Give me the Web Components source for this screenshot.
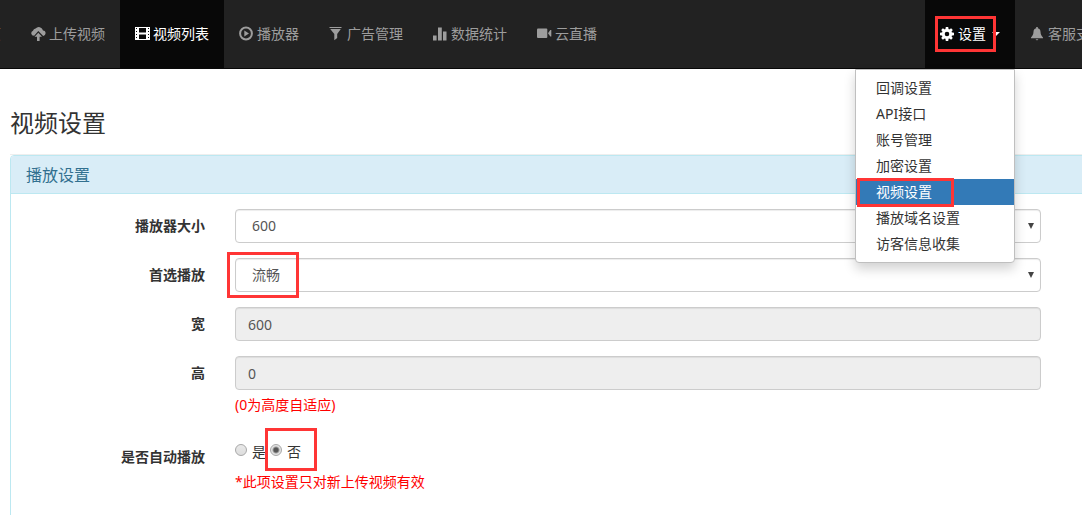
<!DOCTYPE html>
<html lang="zh-CN">
<head>
<meta charset="utf-8">
<meta name="viewport" content="width=device-width, initial-scale=1">
<title>视频设置</title>
<style>
html{overflow-x:clip}
body{margin:0;background:#fff;color:#333;font:14px/20px "Noto Sans","Noto Sans CJK SC",sans-serif;overflow-x:clip}
</style>
</head>
<body>
<video-app></video-app>
<script>
const define = (name, css, html) => customElements.define(name, class extends HTMLElement {
  connectedCallback() {
    if (this.shadowRoot) return;
    const t = document.createElement('template');
    const body = typeof html === 'function' ? html(this) : html;
    t.innerHTML = `<style>*{box-sizing:border-box}${css}</style>${body}`;
    this.attachShadow({mode: 'open'}).append(t.content.cloneNode(true));
  }
});

const glyphs = {
  upload: '<path d="M3.2 8.8A2.9 2.9 0 0 1 .2 6.2 2.6 2.6 0 0 1 2 3.8 3 3 0 0 1 4.6 1.6 4.2 4.2 0 0 1 12 3.4a2.8 2.8 0 0 1 2.6 2.8 2.8 2.8 0 0 1-2.4 2.7L7.3 4z"/><path d="M7.3 5.8 11 9.8H8.6V14H6V9.8H3.6z"/>',
  film: '<path fill-rule="evenodd" d="M0 0H15V13H0zM1 1V2H2V1zM1 4V5H2V4zM1 7V8H2V7zM1 10V11H2V10zM13 1V2H14V1zM13 4V5H14V4zM13 7V8H14V7zM13 10V11H14V10zM4 1V5.5H11V1zM4 7.5V12H11V7.5z"/>',
  play: '<circle cx="7" cy="6.5" r="5.9" fill="none" stroke="currentColor" stroke-width="2"/><path d="M5.3 3.4 10 6.5 5.3 9.6z"/>',
  filter: '<path d="M.5 0H12.5V1H.5zM1.2 2H11.8L8.2 7V11L5.3 13.2V7z"/>',
  stats: '<path d="M0 8.5H3.6V13.5H0zM5 .5H8.8V13.5H5zM10 4.5H13.5V13.5H10z"/>',
  camera: '<rect y="1.5" width="10.3" height="9.6" rx="1"/><path d="M11 6.3 13.3 3H14.3V9.6H13.3z"/>',
  cog: '<path d="M5.8 0H8.2L8.7 3H5.3zM5.8 14H8.2L8.7 11H5.3z"/><path transform="rotate(45 7 7)" d="M5.8 0H8.2L8.7 3H5.3zM5.8 14H8.2L8.7 11H5.3z"/><path transform="rotate(90 7 7)" d="M5.8 0H8.2L8.7 3H5.3zM5.8 14H8.2L8.7 11H5.3z"/><path transform="rotate(135 7 7)" d="M5.8 0H8.2L8.7 3H5.3zM5.8 14H8.2L8.7 11H5.3z"/><circle cx="7" cy="7" r="3.7" fill="none" stroke="currentColor" stroke-width="2.8"/>',
  bell: '<path d="M6.2 0H7.8V1.2C9.7 1.6 10.4 3.1 10.5 4.7 10.7 7.7 11.4 8.7 13 10.5V11.3H1V10.5C2.6 8.7 3.3 7.7 3.5 4.7 3.6 3.1 4.3 1.6 6.2 1.2zM5.5 12.2H8.5L7 13.6z"/>'
};
define('glyph-icon', ':host{display:block;flex:none;width:14px;height:14px}svg{display:block;overflow:visible}',
  e => `<svg width="14" height="14" viewBox="0 0 14 14" fill="currentColor" aria-hidden="true">${glyphs[e.getAttribute('name')] || ''}</svg>`);

/* Red outline laid over the thing that it points at; its place comes from the host's inset. */
define('highlight-box', ':host{display:block;position:absolute;z-index:5;border:3px solid #ff3535;box-sizing:border-box;pointer-events:none}', '');

define('nav-item', `
:host{display:block;flex:none;position:relative}
a{display:flex;align-items:center;gap:4px;height:68px;padding:0 15px;color:#9d9d9d;text-decoration:none;white-space:nowrap}
:host([active]) a{background:#080808;color:#fff}
.caret{margin-left:2px;border:4px solid transparent;border-top-color:currentColor;border-bottom:0}`,
  e => `<a href="#"><glyph-icon name="${e.getAttribute('icon')}"></glyph-icon><span><slot></slot></span>${e.hasAttribute('caret') ? '<i class="caret"></i>' : ''}</a><slot name="over"></slot>`);

define('menu-item', `
:host{display:block;position:relative}
a{display:block;padding:3px 20px;color:#333;text-decoration:none;white-space:nowrap}
:host([active]) a{background:#337ab7;color:#fff}
highlight-box{inset:-1px 60px -2px 1px}`,
  e => `<a href="#"><slot></slot></a>${e.hasAttribute('active') ? '<highlight-box></highlight-box>' : ''}`);

define('drop-menu', `
:host{display:block;position:absolute;z-index:4;top:calc(100% + 1px);right:0;width:160px;box-sizing:border-box;padding:5px 0;background:#fff;border:1px solid #bfbfbf;border-radius:0 0 4px 4px;box-shadow:0 6px 12px rgba(0,0,0,.18)}`,
  '<slot></slot>');

define('top-nav', `
:host{display:block;background:#222;border-bottom:1px solid #080808}
nav{display:flex;justify-content:space-between;margin:0 -37px 0 -60px}
div{display:flex}
.mark{inset:16px 19px 16px 10px}`,
  `<nav><div>
<nav-item icon="home">首页</nav-item><nav-item icon="upload">上传视频</nav-item><nav-item icon="film" active>视频列表</nav-item><nav-item icon="play">播放器</nav-item><nav-item icon="filter">广告管理</nav-item><nav-item icon="stats">数据统计</nav-item><nav-item icon="camera">云直播</nav-item>
</div><div>
<nav-item icon="cog" active caret>设置<highlight-box slot="over" class="mark"></highlight-box>
<drop-menu slot="over"><menu-item>回调设置</menu-item><menu-item>API接口</menu-item><menu-item>账号管理</menu-item><menu-item>加密设置</menu-item><menu-item active>视频设置</menu-item><menu-item>播放域名设置</menu-item><menu-item>访客信息收集</menu-item></drop-menu></nav-item><nav-item icon="bell">客服支持</nav-item>
</div></nav>`);

define('info-panel', `
:host{display:block;border:1px solid #bce8f1;border-radius:4px}
h2{margin:0;padding:9px 15px 8px;background:#d9edf7;border-bottom:1px solid #bce8f1;border-radius:3px 3px 0 0;color:#31708f;font-size:16px;font-weight:400;line-height:20px}
div{display:grid;gap:15px;padding:15px 0 40px}`,
  e => `<h2>${e.getAttribute('heading')}</h2><div><slot></slot></div>`);

const row = `
:host{display:grid;grid-template-columns:194px minmax(0,1fr);column-gap:30px}
.label{padding-top:7px;text-align:right;font-weight:700}
.field{position:relative}
.note{margin:5px 0 10px;color:#f00}
.control{display:block;width:100%;height:34px;margin:0;padding:6px 12px;border:1px solid #ccc;border-radius:4px;background:#fff;color:#555;font:inherit;box-shadow:inset 0 1px 1px rgba(0,0,0,.075)}`;

define('select-field', row + `
select.control{appearance:none;padding-left:16px}
svg{position:absolute;right:6px;top:13px;pointer-events:none}
highlight-box{left:-8px;top:-6px;width:72px;height:46px}`,
  e => `<label class="label" for="c">${e.getAttribute('label')}</label><div class="field"><select class="control" id="c"><option>${e.getAttribute('value')}</option></select><svg width="8" height="8" fill="#444" aria-hidden="true"><path d="M1 1H7L4 7z"/></svg>${e.hasAttribute('marked') ? '<highlight-box></highlight-box>' : ''}</div>`);

define('text-field', row + `
input.control{background:#eee}`,
  e => `<label class="label" for="c">${e.getAttribute('label')}</label><div class="field"><input class="control" id="c" type="text" readonly value="${e.getAttribute('value')}">${e.hasAttribute('note') ? `<p class="note">${e.getAttribute('note')}</p>` : ''}</div>`);

define('radio-field', row + `
.choices{display:flex;gap:4px;height:24px}
.choices label{display:flex;gap:5px;position:relative;line-height:24px}
input{appearance:none;width:12px;height:12px;margin:4px 0 0;border:1px solid #a8a8a8;border-radius:50%;background:linear-gradient(#e9e9e9,#ddd)}
input:checked{background:radial-gradient(circle,#555 0 2px,#e2e2e2 4px)}
.note{margin:8px 0 0}
highlight-box{left:-5px;top:-12px;width:52px;height:43px}`,
  e => `<span class="label" id="l">${e.getAttribute('label')}</span><div class="field"><div class="choices" role="radiogroup" aria-labelledby="l"><label><input type="radio" name="auto">是</label><label><input type="radio" name="auto" checked>否<highlight-box></highlight-box></label></div><p class="note">${e.getAttribute('note')}</p></div>`);

define('video-app', `
:host{display:block}
main{padding-left:10px}
h1{margin:0;padding:38px 0 15px;border-bottom:1px solid #eee;font-size:24px;font-weight:400;line-height:32px}
info-panel{margin-right:-10px}
select-field,text-field,radio-field{margin-right:50px}`,
  `<top-nav></top-nav><main><h1>视频设置</h1>
<info-panel heading="播放设置">
<select-field label="播放器大小" value="600"></select-field>
<select-field label="首选播放" value="流畅" marked></select-field>
<text-field label="宽" value="600"></text-field>
<text-field label="高" value="0" note="(0为高度自适应)"></text-field>
<radio-field label="是否自动播放" note="*此项设置只对新上传视频有效"></radio-field>
</info-panel></main>`);
</script>
</body>
</html>
